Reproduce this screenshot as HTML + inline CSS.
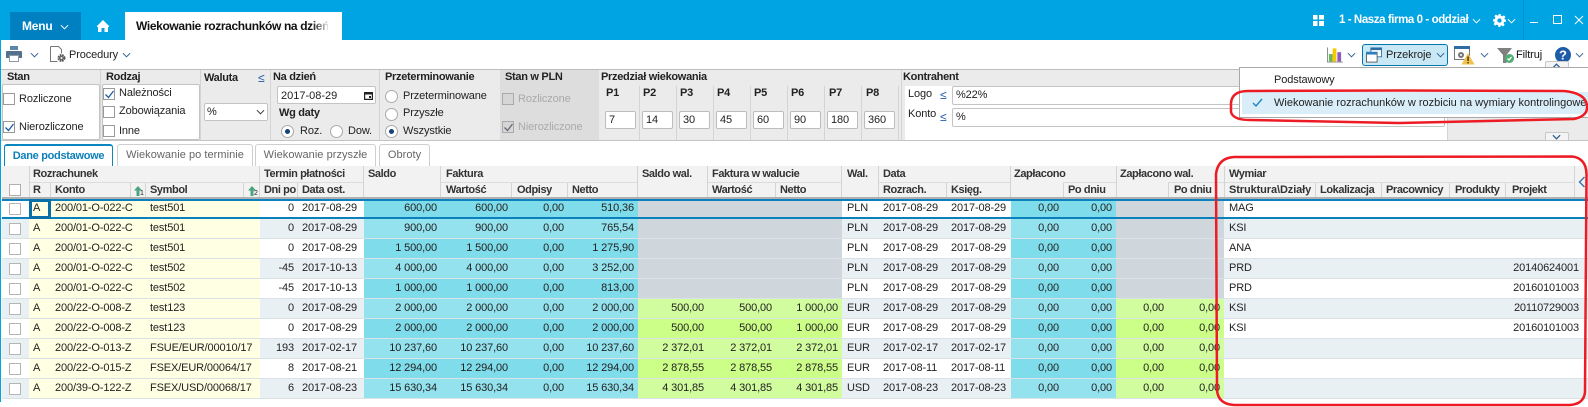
<!DOCTYPE html>
<html lang="pl"><head><meta charset="utf-8"><title>Wiekowanie rozrachunków</title>
<style>
html,body{margin:0;padding:0;width:1588px;height:407px;overflow:hidden;background:#fff}
body{position:relative;font-family:"Liberation Sans",sans-serif;font-size:11px;color:#222}
.a{position:absolute}
.t{position:absolute;white-space:nowrap;line-height:14px;letter-spacing:-.12px}
.b{font-weight:bold;letter-spacing:-.3px;color:#222}
.h{position:absolute;white-space:nowrap;line-height:14px;font-weight:bold;letter-spacing:-.4px;color:#333}
.ch{position:absolute;width:9px;height:6px;fill:none;stroke:#34608f;stroke-width:1.1}
.cw{stroke:#fff}
.cb{position:absolute;width:10px;height:10px;border:1px solid #9a9a9a;background:#fff}
.rd{position:absolute;width:11px;height:11px;border:1px solid #aaa;border-radius:50%;background:#fff}
.rd i{position:absolute;left:3px;top:3px;width:5px;height:5px;border-radius:50%;background:#16427a}
.w{position:absolute;background:#fff;border:1px solid #c4c4c4;border-radius:2px;box-sizing:border-box}
.in{position:absolute;background:#fff;border:1px solid #bdbdbd;border-radius:2px;box-sizing:border-box;height:18px;line-height:16px;padding-left:3px;letter-spacing:-.1px;width:31px;top:111px}
.p{position:absolute;top:86px;font-weight:bold;line-height:14px;letter-spacing:-.2px}
.s{position:absolute;width:1px;background:#d4d4d4}
.tab{position:absolute;top:144px;height:22px;box-sizing:border-box;border:1px solid #cfcfcf;border-bottom:0;border-radius:3px 3px 0 0;text-align:center;line-height:20px;color:#666;letter-spacing:.05px}
table{position:absolute;left:2px;top:199px;border-collapse:separate;border-spacing:0;table-layout:fixed;width:1586px}
td{height:19px;padding:0;border-bottom:1px solid #dbe2e5;white-space:nowrap;overflow:hidden;letter-spacing:-.13px;color:#222;background:#fff;line-height:19px;padding-left:4px;box-sizing:content-box}
tr{height:20px}
tr:nth-child(even) td{background:#e9f0f4}
td:nth-child(2),td:nth-child(3),td:nth-child(4),tr:nth-child(even) td:nth-child(2),tr:nth-child(even) td:nth-child(3),tr:nth-child(even) td:nth-child(4){background:#ffffe3}
td:nth-child(5),td:nth-child(n+7):nth-child(-n+13),td:nth-child(n+17):nth-child(-n+20){text-align:right;padding-left:0;padding-right:4px}
td:nth-child(n+7):nth-child(-n+10),td:nth-child(17),td:nth-child(18){background:#7fdcea}
tr:nth-child(even) td:nth-child(n+7):nth-child(-n+10),tr:nth-child(even) td:nth-child(17),tr:nth-child(even) td:nth-child(18){background:#93e2ee}
td:nth-child(n+11):nth-child(-n+13),td:nth-child(19),td:nth-child(20){background:#ccff88}
tr:nth-child(even) td:nth-child(n+11):nth-child(-n+13),tr:nth-child(even) td:nth-child(19),tr:nth-child(even) td:nth-child(20){background:#d1fd9e}
tr.n td:nth-child(n+11):nth-child(-n+13),tr.n td:nth-child(19),tr.n td:nth-child(20){background:#cfd6dc}
td:nth-child(25){text-align:right;padding-left:0;padding-right:9px}
td:nth-child(14),td:nth-child(21){padding-left:5px}
td:first-child{position:relative;padding:0}
td:first-child:before{content:"";position:absolute;left:7px;top:4px;width:10px;height:10px;border:1px solid #b5b5b5;background:#fff}
</style></head><body>

<!-- title bar -->
<div class="a" style="left:0;top:0;width:1588px;height:40px;background:#00a4e3"></div>
<div class="a" style="left:10px;top:12px;width:71px;height:28px;background:#0080c0"></div>
<div class="t" style="left:22px;top:19px;color:#fff;font-weight:bold;font-size:12px;letter-spacing:-.2px">Menu</div>
<svg class="ch cw" style="left:60px;top:24px" viewBox="0 0 10 6"><path d="M1 1l4 4 4-4"/></svg>
<svg class="a" style="left:97px;top:19px" width="12" height="14" viewBox="0 0 12 14"><path fill="#fff" d="M6 1L0 7v1h1v5h3.500V9h3v4H11V8h1V7z"/></svg>
<div class="a" style="left:125px;top:12px;width:217px;height:28px;background:#fff"></div>
<div class="t" style="left:136px;top:19px;width:192px;overflow:hidden;font-weight:bold;font-size:12px;letter-spacing:-.36px;color:#111">Wiekowanie rozrachunków na dzień</div>
<div class="a" style="left:312px;top:16px;width:18px;height:18px;background:linear-gradient(90deg,rgba(255,255,255,0),#fff)"></div>
<svg class="a" style="left:1313px;top:15px" width="11" height="11"><path fill="#fff" d="M0 0h4.500v4.500H0zM6 0h5v4.500H6zM0 6h4.500v5H0zM6 6h5v5H6z"/></svg>
<div class="t" style="left:1339px;top:13px;color:#fff;font-weight:bold;font-size:11.500px;letter-spacing:-.42px">1 - Nasza firma 0 - oddział</div>
<svg class="ch cw" style="left:1472px;top:18px" viewBox="0 0 10 6"><path d="M1 1l4 4 4-4"/></svg>
<svg class="a" style="left:1493px;top:14px" width="13" height="13" viewBox="0 0 24 24"><path fill="#fff" fill-rule="evenodd" d="M10 0h4l.7 3.400 2.500 1 2.900-1.900 2.800 2.800-1.900 2.900 1 2.500L24 10v4l-3.400.7-1 2.500 1.900 2.900-2.800 2.800-2.900-1.900-2.500 1L14 24h-4l-.7-3.400-2.500-1-2.900 1.900-2.800-2.800 1.900-2.900-1-2.500L0 14v-4l3.400-.7 1-2.500-1.900-2.900 2.800-2.800 2.900 1.900 2.500-1zM12 8a4 4 0 100 8 4 4 0 000-8z"/></svg>
<svg class="ch cw" style="left:1507px;top:18px" viewBox="0 0 10 6"><path d="M1 1l4 4 4-4"/></svg>
<div class="a" style="left:1523px;top:0;width:1px;height:40px;background:#0093cc"></div>
<div class="a" style="left:1530px;top:22px;width:8px;height:1px;background:#fff"></div>
<div class="a" style="left:1553px;top:15px;width:7px;height:7px;border:1px solid #fff"></div>
<svg class="a" style="left:1574px;top:15px" width="10" height="10"><path stroke="#fff" fill="none" d="M1 1l8 8M9 1l-8 8"/></svg>

<!-- left edge -->
<div class="a" style="left:0;top:40px;width:1px;height:362px;background:#00a4e3"></div>

<!-- toolbar left -->
<svg class="a" style="left:6px;top:46px" width="16" height="17" viewBox="0 0 16 17"><path fill="#5b87ad" d="M4 0h8v4H4z"/><path fill="#55708c" d="M1 5h14a1 1 0 011 1v6h-3V9H3v3H0V6a1 1 0 011-1z"/><path fill="#fff" stroke="#8a9aa8" d="M3.500 9.500h9v6h-9z"/></svg>
<svg class="ch" style="left:30px;top:52px" viewBox="0 0 10 6"><path d="M1 1l4 4 4-4"/></svg>
<svg class="a" style="left:50px;top:46px" width="17" height="17" viewBox="0 0 17 17"><path fill="none" stroke="#777" d="M.5.500h8l3 3v4M.5.500v15h7"/><circle cx="11.500" cy="12" r="3" fill="none" stroke="#555" stroke-width="2" stroke-dasharray="1.600 .8"/><circle cx="11.500" cy="12" r="2.500" fill="#666"/><circle cx="11.500" cy="12" r="1" fill="#fff"/></svg>
<div class="t" style="left:69px;top:48px">Procedury</div>
<svg class="ch" style="left:122px;top:52px" viewBox="0 0 10 6"><path d="M1 1l4 4 4-4"/></svg>

<!-- toolbar right -->
<svg class="a" style="left:1327px;top:47px" width="16" height="16" viewBox="0 0 17 16"><path fill="none" stroke="#888" d="M.5 0v15.500H17"/><path fill="#6cb65f" d="M2 7h4v8H2z"/><path fill="#f8c700" d="M6 1h4v14H6z"/><path fill="#8a5cc2" d="M11 5h4v10h-4z"/></svg>
<svg class="ch" style="left:1347px;top:52px" viewBox="0 0 10 6"><path d="M1 1l4 4 4-4"/></svg>
<div class="a" style="left:1362px;top:44px;width:86px;height:22px;box-sizing:border-box;background:#c8e8f6;border:1px solid #0078ae;border-radius:3px"></div>
<svg class="a" style="left:1366px;top:47px" width="16" height="16" viewBox="0 0 18 17"><path fill="#fff" stroke="#2f6ea5" d="M5.500.500h12v10h-12z"/><path fill="#2f6ea5" d="M5 0h13v3H5z"/><path fill="#fff" stroke="#555" d="M.5 5.500h12v11H.5z"/><path fill="#2f7fc0" d="M0 5h13v3H0z"/></svg>
<div class="t" style="left:1386px;top:48px">Przekroje</div>
<svg class="ch" style="left:1436px;top:52px" viewBox="0 0 10 6"><path d="M1 1l4 4 4-4"/></svg>
<svg class="a" style="left:1454px;top:46px" width="21" height="19" viewBox="0 0 21 19"><path fill="#fff" stroke="#777" d="M.5.500h15v13H.5z"/><path fill="#2f6ea5" d="M0 0h16v3H0z"/><circle cx="7" cy="9" r="3" fill="#777"/><circle cx="7" cy="9" r="1" fill="#fff"/><path fill="#f3c24c" d="M14 7l6.500 11.500h-13z"/><path fill="#222" d="M13.400 10.500h1.300v4.500h-1.300zM13.400 16h1.300v1.400h-1.300z"/></svg>
<svg class="ch" style="left:1480px;top:52px" viewBox="0 0 10 6"><path d="M1 1l4 4 4-4"/></svg>
<svg class="a" style="left:1497px;top:47px" width="19" height="17" viewBox="0 0 19 17"><path fill="#808080" d="M0 1h15L9.500 8v8H6V8z"/><circle cx="12.500" cy="11.500" r="4.500" fill="#4fae74"/><path fill="none" stroke="#fff" stroke-width="1.300" d="M10.500 11.500l1.500 1.500 2.500-3"/></svg>
<div class="t" style="left:1516px;top:48px;color:#111">Filtruj</div>
<svg class="a" style="left:1555px;top:47px" width="16" height="16"><circle cx="8" cy="8" r="8" fill="#1d5ca8"/><text x="8" y="12.500" text-anchor="middle" font-family="Liberation Sans" font-size="13" font-weight="bold" fill="#fff">?</text></svg>
<svg class="ch" style="left:1575px;top:52px" viewBox="0 0 10 6"><path d="M1 1l4 4 4-4"/></svg>

<!-- filter panel -->
<div class="a" style="left:1px;top:69px;width:1587px;height:72px;box-sizing:border-box;background:#ebebeb;border-top:1px solid #bcbcbc;border-bottom:1px solid #c4c4c4"></div>
<div class="s" style="left:100px;top:70px;height:70px"></div>
<div class="s" style="left:200px;top:70px;height:70px"></div>
<div class="s" style="left:270px;top:70px;height:70px"></div>
<div class="s" style="left:379px;top:70px;height:70px"></div>
<div class="a" style="left:500px;top:70px;width:99px;height:70px;background:#dddddd"></div>
<div class="s" style="left:901px;top:70px;height:70px"></div>

<div class="t b" style="left:7px;top:70px">Stan</div>
<div class="w" style="left:2px;top:84px;width:98px;height:56px"></div>
<div class="cb" style="left:3px;top:93px"></div><div class="t" style="left:19px;top:92px">Rozliczone</div>
<div class="cb" style="left:3px;top:121px"></div><svg class="a" style="left:5px;top:123px" width="9" height="9"><path fill="none" stroke="#1d5ca8" stroke-width="1.300" d="M.5 4.500l3 3 5-6.500"/></svg>
<div class="t" style="left:19px;top:120px">Nierozliczone</div>

<div class="t b" style="left:106px;top:70px">Rodzaj</div>
<div class="w" style="left:102px;top:84px;width:98px;height:56px"></div>
<div class="cb" style="left:103px;top:88px"></div><svg class="a" style="left:105px;top:90px" width="9" height="9"><path fill="none" stroke="#1d5ca8" stroke-width="1.300" d="M.5 4.500l3 3 5-6.500"/></svg>
<div class="t" style="left:119px;top:86px">Należności</div>
<div class="cb" style="left:103px;top:106px"></div><div class="t" style="left:119px;top:104px">Zobowiązania</div>
<div class="cb" style="left:103px;top:125px"></div><div class="t" style="left:119px;top:124px">Inne</div>

<div class="t b" style="left:204px;top:71px">Waluta</div>
<div class="t" style="left:258px;top:71px;color:#1d5ca8;font-size:12px">≤</div>
<div class="w" style="left:204px;top:103px;width:64px;height:18px"></div>
<div class="t" style="left:207px;top:105px">%</div>
<svg class="ch" style="left:256px;top:109px;stroke:#333" viewBox="0 0 10 6"><path d="M1 1l4 4 4-4"/></svg>

<div class="t b" style="left:273px;top:70px">Na dzień</div>
<div class="w" style="left:277px;top:86px;width:99px;height:18px"></div>
<div class="t" style="left:281px;top:89px;letter-spacing:0">2017-08-29</div>
<svg class="a" style="left:364px;top:91px" width="9" height="9"><path fill="none" stroke="#222" stroke-width="1.200" d="M.6 1.600h7.800v6.800H.6z"/><path fill="#222" d="M0 1h9v2.500H0zM5 5h2v2H5z"/></svg>
<div class="t b" style="left:279px;top:106px">Wg daty</div>
<div class="rd" style="left:281px;top:125px"><i></i></div><div class="t" style="left:300px;top:124px">Roz.</div>
<div class="rd" style="left:330px;top:125px"></div><div class="t" style="left:348px;top:124px">Dow.</div>

<div class="t b" style="left:385px;top:70px">Przeterminowanie</div>
<div class="rd" style="left:385px;top:90px"></div><div class="t" style="left:403px;top:89px">Przeterminowane</div>
<div class="rd" style="left:385px;top:108px"></div><div class="t" style="left:403px;top:106px">Przyszłe</div>
<div class="rd" style="left:385px;top:125px"><i></i></div><div class="t" style="left:403px;top:124px">Wszystkie</div>

<div class="t b" style="left:505px;top:70px">Stan w PLN</div>
<div class="cb" style="left:502px;top:93px;background:#d6d6d6;border-color:#aaa"></div><div class="t" style="left:518px;top:92px;color:#aaa">Rozliczone</div>
<div class="cb" style="left:502px;top:121px;background:#d6d6d6;border-color:#aaa"></div><svg class="a" style="left:504px;top:123px" width="9" height="9"><path fill="none" stroke="#667" stroke-width="1.300" d="M.5 4.500l3 3 5-6.500"/></svg>
<div class="t" style="left:518px;top:120px;color:#aaa">Nierozliczone</div>

<div class="t b" style="left:601px;top:70px">Przedział wiekowania</div>
<div class="p" style="left:606px">P1</div><div class="p" style="left:643px">P2</div><div class="p" style="left:680px">P3</div><div class="p" style="left:717px">P4</div><div class="p" style="left:754px">P5</div><div class="p" style="left:791px">P6</div><div class="p" style="left:829px">P7</div><div class="p" style="left:866px">P8</div>
<div class="in" style="left:605px">7</div><div class="in" style="left:642px">14</div><div class="in" style="left:679px">30</div><div class="in" style="left:716px">45</div><div class="in" style="left:753px">60</div><div class="in" style="left:790px">90</div><div class="in" style="left:827px">180</div><div class="in" style="left:864px">360</div>
<div class="s" style="left:639px;top:86px;height:54px"></div><div class="s" style="left:676px;top:86px;height:54px"></div><div class="s" style="left:713px;top:86px;height:54px"></div><div class="s" style="left:750px;top:86px;height:54px"></div><div class="s" style="left:787px;top:86px;height:54px"></div><div class="s" style="left:824px;top:86px;height:54px"></div><div class="s" style="left:861px;top:86px;height:54px"></div><div class="s" style="left:898px;top:86px;height:54px"></div>

<div class="t b" style="left:903px;top:70px">Kontrahent</div>
<div class="a" style="left:905px;top:86px;width:542px;height:54px;background:#fff"></div>
<div class="a" style="left:1447px;top:86px;width:141px;height:54px;background:#ebebeb;border-left:1px solid #d4d4d4"></div>
<div class="t" style="left:908px;top:87px">Logo</div><div class="t" style="left:940px;top:88px;color:#1d5ca8;font-size:12px">≤</div>
<div class="w" style="left:952px;top:86px;width:493px;height:19px"></div><div class="t" style="left:956px;top:88px">%22%</div>
<div class="t" style="left:908px;top:107px">Konto</div><div class="t" style="left:940px;top:110px;color:#1d5ca8;font-size:12px">≤</div>
<div class="w" style="left:952px;top:108px;width:493px;height:19px"></div><div class="t" style="left:956px;top:110px">%</div>
<div class="a" style="left:1545px;top:132px;width:24px;height:9px;box-sizing:border-box;background:#f4f4f4;border:1px solid #c8c8c8;border-radius:2px 2px 0 0"></div>
<svg class="ch" style="left:1552px;top:134px;stroke-width:1.500" viewBox="0 0 10 6"><path d="M1 1l4 4 4-4"/></svg>
<div class="a" style="left:1545px;top:61px;width:24px;height:8px;box-sizing:border-box;background:#f4f4f4;border:1px solid #c8c8c8;border-radius:2px 2px 0 0"></div>
<svg class="ch" style="left:1552px;top:63px;stroke-width:1.500" viewBox="0 0 10 6"><path d="M1 5l4-4 4 4"/></svg>

<!-- dropdown -->
<div class="a" style="left:1239px;top:67px;width:349px;height:51px;box-sizing:border-box;background:#fff;border:1px solid #a8a8a8;border-right:0"></div>
<div class="t" style="left:1274px;top:73px;color:#222">Podstawowy</div>
<div class="a" style="left:1242px;top:92px;width:346px;height:22px;background:#d9eef8"></div>
<svg class="a" style="left:1252px;top:98px" width="11" height="10"><path fill="none" stroke="#1f84c4" stroke-width="1.400" d="M1 5l3 3 6-7"/></svg>
<div class="t" style="left:1274px;top:96px;color:#222;letter-spacing:0">Wiekowanie rozrachunków w rozbiciu na wymiary kontrolingowe</div>

<!-- tabs -->
<div class="tab" style="left:4px;width:109px;border:1px solid #0c86c0;border-top:2px solid #0c86c0;border-bottom:0;color:#0c7fb8;font-weight:bold;letter-spacing:-.3px">Dane podstawowe</div>
<div class="tab" style="left:117px;width:136px">Wiekowanie po terminie</div>
<div class="tab" style="left:255px;width:121px">Wiekowanie przyszłe</div>
<div class="tab" style="left:379px;width:51px">Obroty</div>

<!-- grid header -->
<div class="a" style="left:2px;top:166px;width:1586px;height:31px;background:#f2f2f2"></div>
<div class="a" style="left:29px;top:182px;width:335px;height:1px;background:#dcdcdc"></div>
<div class="a" style="left:441px;top:182px;width:197px;height:1px;background:#dcdcdc"></div>
<div class="a" style="left:708px;top:182px;width:134px;height:1px;background:#dcdcdc"></div>
<div class="a" style="left:879px;top:182px;width:132px;height:1px;background:#dcdcdc"></div>
<div class="a" style="left:1063px;top:182px;width:53px;height:1px;background:#dcdcdc"></div>
<div class="a" style="left:1168px;top:182px;width:56px;height:1px;background:#dcdcdc"></div>
<div class="a" style="left:1224px;top:182px;width:350px;height:1px;background:#dcdcdc"></div>
<div class="s" style="left:29px;top:166px;height:31px"></div><div class="s" style="left:50px;top:183px;height:14px"></div><div class="s" style="left:130px;top:183px;height:14px"></div><div class="s" style="left:145px;top:183px;height:14px"></div><div class="s" style="left:243px;top:183px;height:14px"></div><div class="s" style="left:259px;top:166px;height:31px"></div><div class="s" style="left:297px;top:183px;height:14px"></div><div class="s" style="left:363px;top:166px;height:31px"></div><div class="s" style="left:440px;top:166px;height:31px"></div><div class="s" style="left:511px;top:183px;height:14px"></div><div class="s" style="left:567px;top:183px;height:14px"></div><div class="s" style="left:637px;top:166px;height:31px"></div><div class="s" style="left:707px;top:166px;height:31px"></div><div class="s" style="left:775px;top:183px;height:14px"></div><div class="s" style="left:841px;top:166px;height:31px"></div><div class="s" style="left:878px;top:166px;height:31px"></div><div class="s" style="left:946px;top:183px;height:14px"></div><div class="s" style="left:1010px;top:166px;height:31px"></div><div class="s" style="left:1063px;top:183px;height:14px"></div><div class="s" style="left:1116px;top:166px;height:31px"></div><div class="s" style="left:1168px;top:183px;height:14px"></div><div class="s" style="left:1224px;top:166px;height:31px"></div><div class="s" style="left:1315px;top:183px;height:14px"></div><div class="s" style="left:1381px;top:183px;height:14px"></div><div class="s" style="left:1449px;top:183px;height:14px"></div><div class="s" style="left:1505px;top:183px;height:14px"></div><div class="s" style="left:1574px;top:166px;height:31px"></div>
<div class="a" style="left:9px;top:184px;width:10px;height:10px;border:1px solid #b0b0b0;background:#fff"></div>
<div class="h" style="left:33px;top:167px">Rozrachunek</div>
<div class="h" style="left:264px;top:167px">Termin płatności</div>
<div class="h" style="left:368px;top:167px">Saldo</div>
<div class="h" style="left:446px;top:167px">Faktura</div>
<div class="h" style="left:642px;top:167px">Saldo wal.</div>
<div class="h" style="left:712px;top:167px">Faktura w walucie</div>
<div class="h" style="left:847px;top:167px">Wal.</div>
<div class="h" style="left:883px;top:167px">Data</div>
<div class="h" style="left:1014px;top:167px">Zapłacono</div>
<div class="h" style="left:1120px;top:167px">Zapłacono wal.</div>
<div class="h" style="left:1229px;top:167px">Wymiar</div>
<div class="h" style="left:33px;top:183px">R</div>
<div class="h" style="left:55px;top:183px">Konto</div>
<div class="h" style="left:150px;top:183px">Symbol</div>
<div class="h" style="left:264px;top:183px">Dni po</div>
<div class="h" style="left:302px;top:183px">Data ost.</div>
<div class="h" style="left:446px;top:183px">Wartość</div>
<div class="h" style="left:517px;top:183px">Odpisy</div>
<div class="h" style="left:572px;top:183px">Netto</div>
<div class="h" style="left:712px;top:183px">Wartość</div>
<div class="h" style="left:780px;top:183px">Netto</div>
<div class="h" style="left:883px;top:183px">Rozrach.</div>
<div class="h" style="left:951px;top:183px">Księg.</div>
<div class="h" style="left:1068px;top:183px">Po dniu</div>
<div class="h" style="left:1174px;top:183px">Po dniu</div>
<div class="h" style="left:1229px;top:183px;letter-spacing:-.1px">Struktura\Działy</div>
<div class="h" style="left:1320px;top:183px">Lokalizacja</div>
<div class="h" style="left:1386px;top:183px">Pracownicy</div>
<div class="h" style="left:1455px;top:183px">Produkty</div>
<div class="h" style="left:1512px;top:183px">Projekt</div>
<svg class="a" style="left:134px;top:186px" width="8" height="10"><path fill="#4aa57e" d="M4 0l4 4.500H5.500V10h-3V4.500H0z"/></svg>
<div class="t" style="left:140px;top:190px;font-size:7px;line-height:8px">1</div>
<svg class="a" style="left:248px;top:186px" width="8" height="10"><path fill="#4aa57e" d="M4 0l4 4.500H5.500V10h-3V4.500H0z"/></svg>
<div class="t" style="left:254px;top:190px;font-size:7px;line-height:8px">2</div>
<svg class="a" style="left:1578px;top:176px" width="8" height="12"><path fill="none" stroke="#2f6ea5" stroke-width="1.300" d="M6.500 1L1.500 6l5 5"/></svg>
<div class="a" style="left:2px;top:197px;width:1586px;height:2px;background:#b0b0b0"></div>

<!-- grid rows -->
<table><colgroup><col style="width:27px"><col style="width:22px"><col style="width:95px"><col style="width:114px"><col style="width:38px"><col style="width:66px"><col style="width:77px"><col style="width:71px"><col style="width:56px"><col style="width:70px"><col style="width:70px"><col style="width:68px"><col style="width:66px"><col style="width:37px"><col style="width:68px"><col style="width:64px"><col style="width:52px"><col style="width:53px"><col style="width:52px"><col style="width:56px"><col style="width:92px"><col style="width:66px"><col style="width:68px"><col style="width:56px"><col style="width:82px"></colgroup>
<tr class="n"><td></td><td>A</td><td>200/01-O-022-C</td><td>test501</td><td>0</td><td>2017-08-29</td><td>600,00</td><td>600,00</td><td>0,00</td><td>510,36</td><td></td><td></td><td></td><td>PLN</td><td>2017-08-29</td><td>2017-08-29</td><td>0,00</td><td>0,00</td><td></td><td></td><td>MAG</td><td></td><td></td><td></td><td></td></tr>
<tr class="n"><td></td><td>A</td><td>200/01-O-022-C</td><td>test501</td><td>0</td><td>2017-08-29</td><td>900,00</td><td>900,00</td><td>0,00</td><td>765,54</td><td></td><td></td><td></td><td>PLN</td><td>2017-08-29</td><td>2017-08-29</td><td>0,00</td><td>0,00</td><td></td><td></td><td>KSI</td><td></td><td></td><td></td><td></td></tr>
<tr class="n"><td></td><td>A</td><td>200/01-O-022-C</td><td>test501</td><td>0</td><td>2017-08-29</td><td>1 500,00</td><td>1 500,00</td><td>0,00</td><td>1 275,90</td><td></td><td></td><td></td><td>PLN</td><td>2017-08-29</td><td>2017-08-29</td><td>0,00</td><td>0,00</td><td></td><td></td><td>ANA</td><td></td><td></td><td></td><td></td></tr>
<tr class="n"><td></td><td>A</td><td>200/01-O-022-C</td><td>test502</td><td>-45</td><td>2017-10-13</td><td>4 000,00</td><td>4 000,00</td><td>0,00</td><td>3 252,00</td><td></td><td></td><td></td><td>PLN</td><td>2017-08-29</td><td>2017-08-29</td><td>0,00</td><td>0,00</td><td></td><td></td><td>PRD</td><td></td><td></td><td></td><td>20140624001</td></tr>
<tr class="n"><td></td><td>A</td><td>200/01-O-022-C</td><td>test502</td><td>-45</td><td>2017-10-13</td><td>1 000,00</td><td>1 000,00</td><td>0,00</td><td>813,00</td><td></td><td></td><td></td><td>PLN</td><td>2017-08-29</td><td>2017-08-29</td><td>0,00</td><td>0,00</td><td></td><td></td><td>PRD</td><td></td><td></td><td></td><td>20160101003</td></tr>
<tr><td></td><td>A</td><td>200/22-O-008-Z</td><td>test123</td><td>0</td><td>2017-08-29</td><td>2 000,00</td><td>2 000,00</td><td>0,00</td><td>2 000,00</td><td>500,00</td><td>500,00</td><td>1 000,00</td><td>EUR</td><td>2017-08-29</td><td>2017-08-29</td><td>0,00</td><td>0,00</td><td>0,00</td><td>0,00</td><td>KSI</td><td></td><td></td><td></td><td>20110729003</td></tr>
<tr><td></td><td>A</td><td>200/22-O-008-Z</td><td>test123</td><td>0</td><td>2017-08-29</td><td>2 000,00</td><td>2 000,00</td><td>0,00</td><td>2 000,00</td><td>500,00</td><td>500,00</td><td>1 000,00</td><td>EUR</td><td>2017-08-29</td><td>2017-08-29</td><td>0,00</td><td>0,00</td><td>0,00</td><td>0,00</td><td>KSI</td><td></td><td></td><td></td><td>20160101003</td></tr>
<tr><td></td><td>A</td><td>200/22-O-013-Z</td><td>FSUE/EUR/00010/17</td><td>193</td><td>2017-02-17</td><td>10 237,60</td><td>10 237,60</td><td>0,00</td><td>10 237,60</td><td>2 372,01</td><td>2 372,01</td><td>2 372,01</td><td>EUR</td><td>2017-02-17</td><td>2017-02-17</td><td>0,00</td><td>0,00</td><td>0,00</td><td>0,00</td><td></td><td></td><td></td><td></td><td></td></tr>
<tr><td></td><td>A</td><td>200/22-O-015-Z</td><td>FSEX/EUR/00064/17</td><td>8</td><td>2017-08-21</td><td>12 294,00</td><td>12 294,00</td><td>0,00</td><td>12 294,00</td><td>2 878,55</td><td>2 878,55</td><td>2 878,55</td><td>EUR</td><td>2017-08-11</td><td>2017-08-11</td><td>0,00</td><td>0,00</td><td>0,00</td><td>0,00</td><td></td><td></td><td></td><td></td><td></td></tr>
<tr><td></td><td>A</td><td>200/39-O-122-Z</td><td>FSEX/USD/00068/17</td><td>6</td><td>2017-08-23</td><td>15 630,34</td><td>15 630,34</td><td>0,00</td><td>15 630,34</td><td>4 301,85</td><td>4 301,85</td><td>4 301,85</td><td>USD</td><td>2017-08-23</td><td>2017-08-23</td><td>0,00</td><td>0,00</td><td>0,00</td><td>0,00</td><td></td><td></td><td></td><td></td><td></td></tr>
</table>

<!-- selected row -->
<div class="a" style="left:2px;top:199px;width:1586px;height:2px;background:#0a80bd"></div>
<div class="a" style="left:2px;top:217px;width:1586px;height:2px;background:#0a80bd"></div>
<div class="a" style="left:29px;top:199px;width:22px;height:20px;box-sizing:border-box;border:3px solid #0a6fa8"></div>

<!-- red annotations -->
<svg class="a" style="left:0;top:0;pointer-events:none" width="1588" height="407" viewBox="0 0 1588 407">
<g fill="none" stroke="#ed1c24" stroke-width="2.500" stroke-linecap="round">
<path d="M1234 157L1572 156.500Q1586 158 1586.500 174L1585 392Q1584 404 1570 405L1234 405Q1218 404 1217 390L1216 174Q1218 158 1234 157Z"/>
<path d="M1248 91Q1232 91 1231 103L1231 112Q1233 120 1250 120L1400 123L1574 119Q1588 116 1587 106Q1586 93 1564 91L1400 90.500Z"/>
</g></svg>
</body></html>
